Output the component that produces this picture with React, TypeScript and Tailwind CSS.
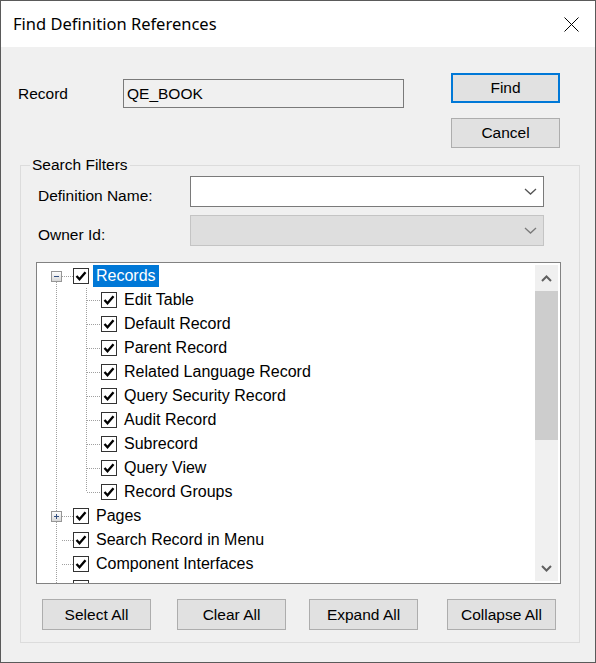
import React from 'react';

type TreeRow = {
  id: string;
  label: string;
  level: 0 | 1;
  box?: 'minus' | 'plus';
  first?: boolean;
  lastChild?: boolean;
  selected?: boolean;
};

const ROWS: TreeRow[] = [
  { id: 'rec', label: 'Records', level: 0, box: 'minus', first: true, selected: true },
  { id: 'edit', label: 'Edit Table', level: 1 },
  { id: 'def', label: 'Default Record', level: 1 },
  { id: 'par', label: 'Parent Record', level: 1 },
  { id: 'rel', label: 'Related Language Record', level: 1 },
  { id: 'qsec', label: 'Query Security Record', level: 1 },
  { id: 'aud', label: 'Audit Record', level: 1 },
  { id: 'sub', label: 'Subrecord', level: 1 },
  { id: 'qv', label: 'Query View', level: 1 },
  { id: 'grp', label: 'Record Groups', level: 1, lastChild: true },
  { id: 'pg', label: 'Pages', level: 0, box: 'plus' },
  { id: 'srm', label: 'Search Record in Menu', level: 0 },
  { id: 'ci', label: 'Component Interfaces', level: 0 },
  // next item, scrolled out of view except the top of its checkbox
  { id: 'more', label: '', level: 0 },
];

const DOT = '#a0a0a0';

// Dotted connector cell for the root level (36px wide)
const RootGutter = ({ row }: { row: TreeRow }) => (
  <svg width="36" height="24" className="shrink-0" shapeRendering="crispEdges">
    <line x1="19.5" y1={row.first ? 12 : 0} x2="19.5" y2="24" stroke={DOT} strokeDasharray="1 1" />
    {row.level === 0 && <line x1="25" y1="12.5" x2="36" y2="12.5" stroke={DOT} strokeDasharray="1 1" />}
    {row.box && (
      <g>
        <defs>
          <linearGradient id={`bx-${row.id}`} x1="0" y1="0" x2="0" y2="1">
            <stop offset="0" stopColor="#ffffff" />
            <stop offset="1" stopColor="#d6d6d6" />
          </linearGradient>
        </defs>
        <rect x="14.5" y="7.5" width="10" height="10" fill={`url(#bx-${row.id})`} stroke="#969696" />
        <line x1="17" y1="12.5" x2="22" y2="12.5" stroke="#34507f" />
        {row.box === 'plus' && <line x1="19.5" y1="10" x2="19.5" y2="15" stroke="#34507f" />}
      </g>
    )}
  </svg>
);

const ChildGutter = ({ last }: { last?: boolean }) => (
  <svg width="28" height="24" className="shrink-0" shapeRendering="crispEdges">
    <line x1="13.5" y1="0" x2="13.5" y2={last ? 12 : 24} stroke={DOT} strokeDasharray="1 1" />
    <line x1="14" y1="12.5" x2="28" y2="12.5" stroke={DOT} strokeDasharray="1 1" />
  </svg>
);

const CheckBox = () => (
  <svg width="16" height="16" className="shrink-0">
    <rect x="0.5" y="0.5" width="15" height="15" fill="#fff" stroke="#333" />
    <path d="M3.5 8 L6.5 11.2 L12.5 4.3" fill="none" stroke="#000" strokeWidth="2.4" />
  </svg>
);

const Chevron = ({ color }: { color: string }) => (
  <svg width="13" height="7" viewBox="0 0 13 7">
    <path d="M1 1 L6.5 6 L12 1" fill="none" stroke={color} strokeWidth="1.3" />
  </svg>
);

const Btn = ({ children, primary, className = '' }: { children: React.ReactNode; primary?: boolean; className?: string }) => (
  <button
    className={`w-[109px] flex items-center justify-center bg-[#e1e1e1] ${primary ? 'border-2 border-[#0078d7]' : 'border border-[#adadad]'} ${className}`}
  >
    {children}
  </button>
);

export default function App() {
  return (
    <div className="w-[596px] h-[663px] border border-[#5a5a5a] bg-[#f0f0f0] text-black text-[15.5px] font-['Liberation_Sans',Arial,sans-serif] flex flex-col overflow-hidden">
      {/* Title bar */}
      <div className="h-[46px] bg-white flex items-center justify-between pl-[12px] pr-[16px] shrink-0">
        <span className="text-[16.5px] font-['Noto_Sans',sans-serif]">Find Definition References</span>
        <svg width="15" height="15" viewBox="0 0 15 15">
          <path d="M0.5 0.5 L14.5 14.5 M14.5 0.5 L0.5 14.5" stroke="#000" strokeWidth="1" />
        </svg>
      </div>

      {/* Record + Find/Cancel */}
      <div className="flex items-start pt-[26px]">
        <div className="flex items-center mt-[6px]">
          <span className="w-[122px] pl-[17px]">Record</span>
          <div className="w-[281px] h-[29px] border border-[#7a7a7a] bg-[#f0f0f0] flex items-center pl-[3px]">QE_BOOK</div>
        </div>
        <div className="ml-[47px] flex flex-col gap-[15px]">
          <Btn primary className="h-[30px]">Find</Btn>
          <Btn className="h-[30px]">Cancel</Btn>
        </div>
      </div>

      {/* Search Filters group */}
      <fieldset className="mt-[7px] ml-[19px] w-[560px] border border-[#dcdcdc] pb-[12px]">
        <legend className="ml-[9px] px-[2px] leading-[20px]">Search Filters</legend>

        <div className="flex items-start h-[31px] mt-[1px]">
          <span className="w-[169px] pl-[17px] mt-[11px] leading-[18px]">Definition Name:</span>
          <div className="w-[354px] h-[31px] bg-white border border-[#7a7a7a] flex items-center justify-end pr-[6px]">
            <Chevron color="#555" />
          </div>
        </div>

        <div className="flex items-start h-[31px] mt-[8px]">
          <span className="w-[169px] pl-[17px] mt-[11px] leading-[18px]">Owner Id:</span>
          <div className="w-[354px] h-[31px] bg-[#dedede] border border-[#c4c4c4] flex items-center justify-end pr-[6px]">
            <Chevron color="#7a7a7a" />
          </div>
        </div>

        {/* Tree */}
        <div className="mt-[16px] ml-[15px] w-[525px] h-[322px] border border-[#828282] bg-white flex text-[16px]">
          <div className="flex-1 overflow-hidden pt-px">
            {ROWS.map((row) => (
              <div key={row.id} className="h-6 flex items-center">
                <RootGutter row={row} />
                {row.level === 1 && <ChildGutter last={row.lastChild} />}
                <CheckBox />
                {row.label && (
                  <span
                    className={`ml-[4px] h-[22px] px-[3px] flex items-center whitespace-nowrap ${row.selected ? 'bg-[#0078d7] text-white' : ''}`}
                  >
                    {row.label}
                  </span>
                )}
              </div>
            ))}
          </div>
          <div className="w-[23px] my-[2px] mr-[2px] bg-[#f0f0f0] flex flex-col">
            <div className="h-[26px] flex items-center justify-center">
              <svg width="11" height="7" viewBox="0 0 11 7">
                <path d="M1 6 L5.5 1.5 L10 6" fill="none" stroke="#606060" strokeWidth="2" />
              </svg>
            </div>
            <div className="h-[149px] bg-[#cdcdcd]" />
            <div className="flex-1" />
            <div className="h-[26px] flex items-center justify-center">
              <svg width="11" height="7" viewBox="0 0 11 7">
                <path d="M1 1 L5.5 5.5 L10 1" fill="none" stroke="#606060" strokeWidth="2" />
              </svg>
            </div>
          </div>
        </div>

        {/* Bottom buttons */}
        <div className="flex mt-[15px] pl-[21px]">
          <Btn className="h-[31px]">Select All</Btn>
          <Btn className="h-[31px] ml-[26px]">Clear All</Btn>
          <Btn className="h-[31px] ml-[23px]">Expand All</Btn>
          <Btn className="h-[31px] ml-[29px]">Collapse All</Btn>
        </div>
      </fieldset>
    </div>
  );
}
